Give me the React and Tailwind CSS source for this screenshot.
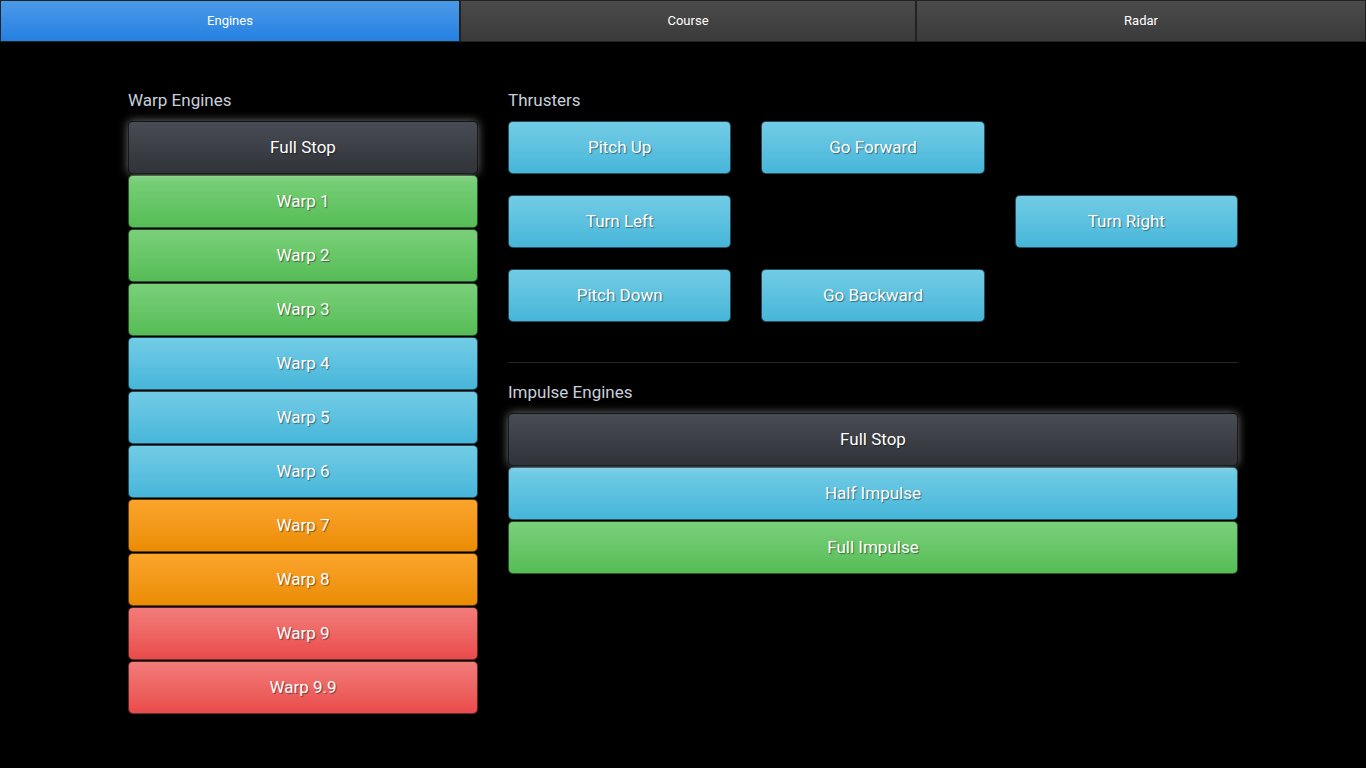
const warp = [
  { label: 'Full Stop', tone: 'stop' },
  { label: 'Warp 1', tone: 'green' },
  { label: 'Warp 2', tone: 'green' },
  { label: 'Warp 3', tone: 'green' },
  { label: 'Warp 4', tone: 'blue' },
  { label: 'Warp 5', tone: 'blue' },
  { label: 'Warp 6', tone: 'blue' },
  { label: 'Warp 7', tone: 'orange' },
  { label: 'Warp 8', tone: 'orange' },
  { label: 'Warp 9', tone: 'red' },
  { label: 'Warp 9.9', tone: 'red' },
]

const tones = {
  stop: 'bg-gradient-to-b from-[#484c54] to-[#303338] shadow-[0_0_10px_rgba(255,255,255,0.45)] relative z-10',
  green: 'bg-gradient-to-b from-[#7ad07a] to-[#55bd55]',
  blue: 'bg-gradient-to-b from-[#72cce5] to-[#46b6da]',
  orange: 'bg-gradient-to-b from-[#fba52a] to-[#eb8c00]',
  red: 'bg-gradient-to-b from-[#f27c7a] to-[#e94a4a]',
}

function Btn({ label, tone, className = '' }) {
  return (
    <button
      className={`h-[53px] w-full rounded-[5px] border border-black/60 text-[17px] text-white [text-shadow:1px_1px_1px_rgba(0,0,0,0.45)] ${tones[tone]} ${className}`}
    >
      {label}
    </button>
  )
}

const tabs = [
  { label: 'Engines', w: 'w-[460px]', active: true },
  { label: 'Course', w: 'w-[456px]' },
  { label: 'Radar', w: 'flex-1' },
]

export default function App() {
  return (
    <div className="min-h-screen bg-black font-['Roboto','Liberation_Sans',sans-serif]">
      <div className="flex h-[42px]">
        {tabs.map(t => (
          <div
            key={t.label}
            className={`flex items-center justify-center border border-[#222] text-[13px] text-white ${t.w} ${
              t.active ? 'bg-gradient-to-b from-[#4a9ae7] to-[#2480e2]' : 'bg-gradient-to-b from-[#4b4b4b] to-[#3a3a3a]'
            }`}
          >
            {t.label}
          </div>
        ))}
      </div>

      <div className="mx-auto mt-[47px] flex w-[1110px] gap-[30px]">
        <div className="w-[350px]">
          <h3 className="mb-[10px] text-[17px] leading-[22px] text-[#c8d0dc]">Warp Engines</h3>
          <div className="flex flex-col gap-[1px]">
            {warp.map(w => (
              <Btn key={w.label} {...w} />
            ))}
          </div>
        </div>

        <div className="w-[730px]">
          <h3 className="mb-[10px] text-[17px] leading-[22px] text-[#c8d0dc]">Thrusters</h3>
          <div className="grid grid-cols-3 gap-x-[30px] gap-y-[21px]">
            <Btn label="Pitch Up" tone="blue" />
            <Btn label="Go Forward" tone="blue" />
            <div />
            <Btn label="Turn Left" tone="blue" />
            <div />
            <Btn label="Turn Right" tone="blue" />
            <Btn label="Pitch Down" tone="blue" />
            <Btn label="Go Backward" tone="blue" />
            <div />
          </div>

          <div className="mt-[40px] border-t border-[#262626]" />

          <h3 className="mb-[10px] mt-[18px] text-[17px] leading-[22px] text-[#c8d0dc]">Impulse Engines</h3>
          <div className="flex flex-col gap-[1px]">
            <Btn label="Full Stop" tone="stop" />
            <Btn label="Half Impulse" tone="blue" />
            <Btn label="Full Impulse" tone="green" />
          </div>
        </div>
      </div>
    </div>
  )
}
